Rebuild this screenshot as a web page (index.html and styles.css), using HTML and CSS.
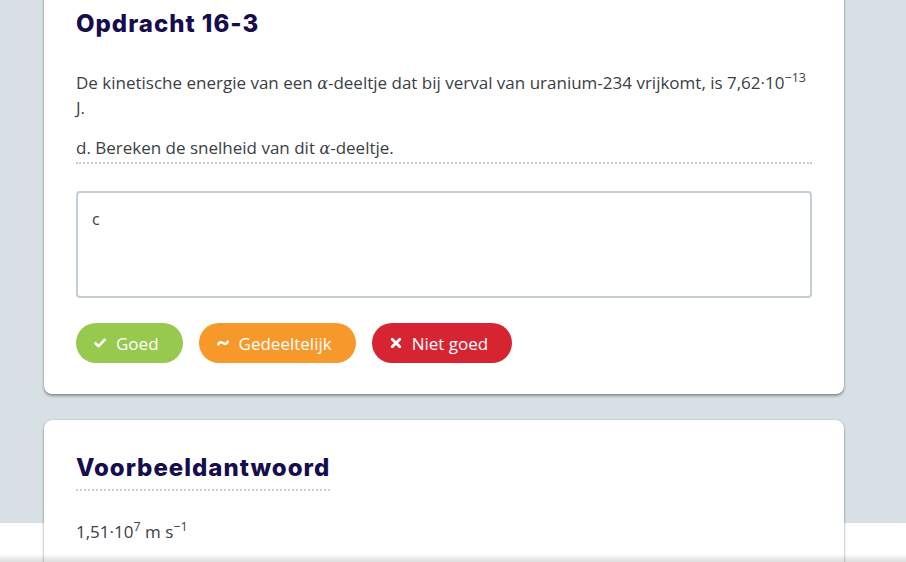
FILE: index.html
```html
<!DOCTYPE html>
<html lang="nl">
<head>
<meta charset="utf-8">
<title>Opdracht 16-3</title>
<link rel="stylesheet" href="styles.css">
</head>
<body>
<main class="column">
  <section class="card card-question">
    <h2 class="card-title">Opdracht 16-3</h2>
    <p class="text">De kinetische energie van een <i class="greek">α</i>-deeltje dat bij verval van uranium-234 vrijkomt, is 7,62·10<sup>−13</sup> J.</p>
    <p class="text question">d. Bereken de snelheid van dit <i class="greek">α</i>-deeltje.</p>
    <textarea class="answer">c</textarea>
    <div class="buttons">
      <button class="btn btn-good">
        <svg class="icon" viewBox="0 0 12 12" width="12" height="12"><path d="M1.5 6.3 L4.6 9.2 L10.6 2.8" fill="none" stroke="#fff" stroke-width="2.6" stroke-linecap="round" stroke-linejoin="round"/></svg>
        <span>Goed</span>
      </button>
      <button class="btn btn-partial">
        <svg class="icon" viewBox="0 0 12 12" width="12" height="12"><path d="M1.3 7.4 C2.2 4.9 4 4.7 6 6 C8 7.3 9.8 7.1 10.7 4.6" fill="none" stroke="#fff" stroke-width="2.6" stroke-linecap="round"/></svg>
        <span>Gedeeltelijk</span>
      </button>
      <button class="btn btn-bad">
        <svg class="icon" viewBox="0 0 12 12" width="12" height="12"><path d="M2.2 2.2 L9.8 9.8 M9.8 2.2 L2.2 9.8" fill="none" stroke="#fff" stroke-width="2.8" stroke-linecap="round"/></svg>
        <span>Niet goed</span>
      </button>
    </div>
  </section>
  <section class="card card-example">
    <h2 class="card-title underlined">Voorbeeldantwoord</h2>
    <p class="text example">1,51·10<sup>7</sup> m s<sup>−1</sup></p>
  </section>
</main>
<div class="bottom-shade"></div>
</body>
</html>
```

FILE: styles.css
```css
html, body {
  margin: 0;
  padding: 0;
}
body {
  background: linear-gradient(to bottom, #d6e0e5 0, #d6e0e5 523px, #ffffff 523px);
  font-family: "Open Sans", "Liberation Sans", sans-serif;
  color: #3a4046;
  height: 562px;
  overflow: hidden;
}
.column {
  width: 800px;
  margin-left: 44px;
  display: flex;
  flex-direction: column;
  gap: 26px;
}
.card {
  background: #fff;
  border-radius: 8px;
  box-shadow: 0 2px 3px rgba(0, 0, 0, 0.35), 0 0 1px rgba(0, 0, 0, 0.35);
  padding: 32px 32px 31px;
}
.card-question {
  margin-top: -24px;
}
.card-title {
  margin: 0 0 32px;
  font-family: "Inter", "Liberation Sans", sans-serif;
  font-weight: 800;
  font-size: 24px;
  line-height: 31px;
  color: #160d4c;
  letter-spacing: 1px;
}
.text {
  margin: 0 0 16px;
  font-size: 17px;
  line-height: 24px;
}
.text sup {
  font-size: 12.5px;
  line-height: 0;
  vertical-align: 7px;
}
.greek {
  font-family: "DejaVu Serif", "Liberation Serif", serif;
  font-style: italic;
  font-size: 16px;
}
.question {
  padding-bottom: 1px;
  border-bottom: 2px dotted #c4cdd2;
  margin-bottom: 27px;
}
.answer {
  display: block;
  box-sizing: border-box;
  width: 100%;
  height: 107px;
  border: 2px solid #c3ced4;
  border-radius: 4px;
  padding: 14px 14px;
  font-family: "Open Sans", "Liberation Sans", sans-serif;
  font-size: 16px;
  line-height: 24px;
  color: #3a4046;
  resize: none;
  outline: none;
  margin: 0 0 25px;
}
.buttons {
  display: flex;
  gap: 16px;
}
.btn {
  display: flex;
  align-items: center;
  gap: 10px;
  height: 40px;
  border: 0;
  border-radius: 20px;
  padding: 0 24px 0 18px;
  color: #fff;
  font-family: "Open Sans", "Liberation Sans", sans-serif;
  font-weight: 500;
  font-size: 17px;
  cursor: pointer;
}
.icon {
  display: block;
  flex: none;
}
.btn-good { background: #97c94e; }
.btn-partial { background: #f7992a; }
.btn-bad { background: #d72433; }
.card-example {
  display: flex;
  flex-direction: column;
  align-items: flex-start;
  padding-bottom: 40px;
}
.underlined {
  display: inline-block;
  margin-bottom: 29px;
  padding-bottom: 6px;
  border-bottom: 2px dotted #c4cdd2;
}
.example {
  margin: 0;
}
.bottom-shade {
  position: fixed;
  left: 0;
  right: 0;
  bottom: 0;
  height: 8px;
  background: linear-gradient(to bottom, rgba(0, 0, 0, 0), rgba(0, 0, 0, 0.14));
  pointer-events: none;
}
```
